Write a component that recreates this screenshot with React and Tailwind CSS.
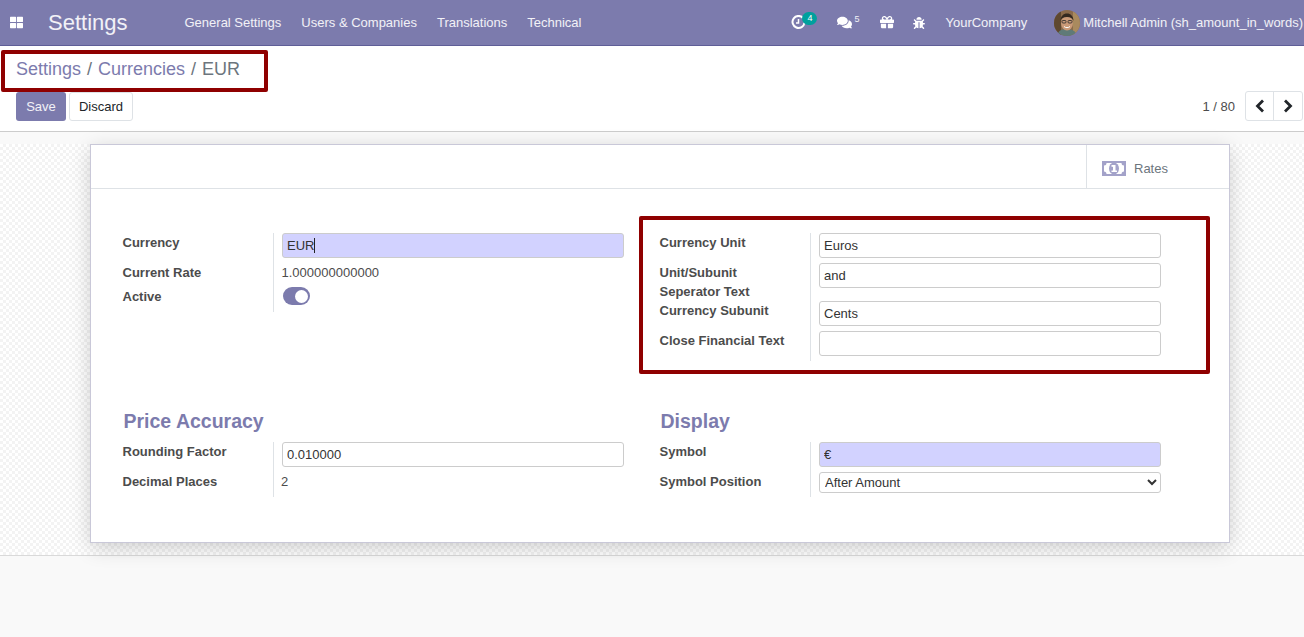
import React from "react";
import { FaThLarge, FaComments, FaGift, FaBug } from "react-icons/fa";

const navMenus = ["General Settings", "Users & Companies", "Translations", "Technical"];

const Avatar = () => (
  <svg width="26" height="26" viewBox="0 0 26 26" className="rounded-full shrink-0">
    <rect width="26" height="26" fill="#8a6a4a" />
    <rect x="0" y="0" width="7" height="26" fill="#5e4830" />
    <rect x="19" y="0" width="7" height="26" fill="#a98a5e" />
    <path d="M3 26c1-6 5-7 10-7s9 2 10 7z" fill="#5f7a78" />
    <ellipse cx="13" cy="13" rx="6" ry="7.500" fill="#c99a78" />
    <path d="M6.500 11c0-5 3-7.500 6.500-7.500s6.500 2.500 6.500 7.500c-1-3-3-4-6.500-4s-5.500 1-6.500 4z" fill="#33291f" />
    <rect x="8" y="10.500" width="4" height="2.500" rx="1" fill="none" stroke="#2a2a2a" strokeWidth="0.8" />
    <rect x="14" y="10.500" width="4" height="2.500" rx="1" fill="none" stroke="#2a2a2a" strokeWidth="0.8" />
    <path d="M10 16.500c1.500 1.500 4.500 1.500 6 0" stroke="#fff" strokeWidth="1" fill="none" />
  </svg>
);

const ClockIcon = () => (
  <svg width="15" height="15" viewBox="0 0 15 15" fill="none" stroke="#fff">
    <path d="M12.300 3.300A6 6 0 1 0 13.500 7.500" strokeWidth="2" />
    <path d="M7.500 4v4H5" strokeWidth="1.500" />
  </svg>
);

const MoneyIcon = () => (
  <svg width="24" height="15" viewBox="0 0 24 15" className="shrink-0">
    <rect width="24" height="15" fill="#a3a2c9" />
    <path d="M2 4.500Q4.500 4.500 4.500 2H19.500Q19.500 4.500 22 4.500V10.500Q19.500 10.500 19.500 13H4.500Q4.500 10.500 2 10.500z" fill="#fff" />
    <ellipse cx="12" cy="7.500" rx="5" ry="6" fill="#a3a2c9" />
    <rect x="11" y="4" width="2.500" height="7" fill="#fff" />
    <rect x="9.500" y="4" width="2" height="1.800" fill="#fff" />
    <rect x="9.500" y="9.500" width="5.500" height="1.500" fill="#fff" />
  </svg>
);

const Chevron = ({ d }) => (
  <svg width="10" height="14" viewBox="0 0 10 14" fill="none" stroke="#212529" strokeWidth="2.800">
    <path d={d} />
  </svg>
);

const Label = ({ children, className = "h-[30px]" }) => (
  <div className={`font-bold text-[#4c4c4c] leading-[19px] border-r border-[#dee2e6] ${className}`}>
    {children}
  </div>
);

const Value = ({ children, className = "h-[30px] pl-2" }) => <div className={className}>{children}</div>;

const Input = ({ value, required }) => (
  <input
    readOnly
    value={value}
    className={`block w-[342px] h-[25px] px-1 rounded-[3px] border border-[#ccc] text-[#333] text-[13px] outline-none ${
      required ? "bg-[#d2d2ff]" : "bg-white"
    }`}
  />
);

const Section = ({ title }) => (
  <h2 className="text-[19.500px] font-bold text-[#7c7bad] leading-[24px] pl-px mb-[9px]">{title}</h2>
);

export default function App() {
  return (
    <div
      className="relative h-[637px] w-[1304px] overflow-hidden bg-[#f9f9f9] text-[13px] text-[#4c4c4c]"
      style={{ fontFamily: '"Liberation Sans", Arial, sans-serif' }}
    >
      {/* top bar */}
      <nav className="flex items-center h-[46px] bg-[#7c7bad] border-b border-[#5f5e97] text-white/90">
        <div className="w-[48px] pl-[10px]">
          <FaThLarge className="text-white text-[13px]" />
        </div>
        <div className="w-[126.500px] text-[22px] leading-none">Settings</div>
        <div className="flex">
          {navMenus.map((item) => (
            <a key={item} className="px-[10px]">
              {item}
            </a>
          ))}
        </div>
        <div className="ml-auto flex items-center">
          <div className="relative mr-[31px]">
            <ClockIcon />
            <span className="absolute -top-[3px] left-[11px] w-[15px] h-[13px] rounded-full bg-[#00a09d] text-[9px] leading-[13px] text-center text-white">
              4
            </span>
          </div>
          <div className="flex items-start w-[22px] mr-[21px]">
            <FaComments className="text-white text-[15px]" />
            <span className="text-[9px] leading-[10px] ml-[2px] -mt-[1px]">5</span>
          </div>
          <FaGift className="text-white text-[14px] mr-[19px] -mt-[2px]" />
          <FaBug className="text-white text-[12px] mr-[20px]" />
          <span className="mr-[27px]">YourCompany</span>
          <Avatar />
          <span className="ml-[3px] mr-px whitespace-nowrap">Mitchell Admin (sh_amount_in_words)</span>
        </div>
      </nav>

      {/* control panel */}
      <div className="h-[86px] bg-white border-b border-[#ccc] pl-4 pr-px">
        <div className="h-[46px] flex items-center text-[18px] gap-[6px]">
          <a className="text-[#7c7bad]">Settings</a>
          <span className="text-[#6c757d]">/</span>
          <a className="text-[#7c7bad]">Currencies</a>
          <span className="text-[#6c757d]">/</span>
          <span className="text-[#6c757d]">EUR</span>
        </div>
        <div className="flex items-start">
          <button className="w-[50px] h-[29px] rounded-[3px] bg-[#7c7bad] text-white/90">Save</button>
          <button className="ml-[3px] w-[64px] h-[29px] rounded-[3px] bg-white border border-[#dee2e6] text-[#212529]">
            Discard
          </button>
          <span className="ml-auto mr-[10px] mt-[5px] text-[#4c4c4c]">1 / 80</span>
          <div className="flex -mt-px h-[30px] rounded-[3px] border border-[#dee2e6]">
            <button className="w-[28px] flex items-center justify-center border-r border-[#dee2e6]">
              <Chevron d="M8 1.500L2.500 7L8 12.500" />
            </button>
            <button className="w-[28px] flex items-center justify-center">
              <Chevron d="M2 1.500L7.500 7L2 12.500" />
            </button>
          </div>
        </div>
      </div>

      {/* form area */}
      <div className="mt-3 h-[412px] border-b border-[#d9d9d9] bg-[repeating-conic-gradient(#f3f3f3_0%_25%,#ffffff_0%_50%)] bg-[length:6px_6px]">
        <div className="ml-[90px] w-[1140px] h-[399px] bg-white border border-[#c9c8d8] shadow-[0_5px_20px_-1px_rgba(0,0,0,0.2)]">
          <div className="flex justify-end h-[44px] border-b border-[#dee2e6]">
            <button className="w-[143px] pl-[15px] pt-[4px] flex items-center gap-[8px] border-l border-[#dee2e6] text-[#6c757d]">
              <MoneyIcon />
              Rates
            </button>
          </div>
          <div className="pt-[44px] pl-[31.500px] grid grid-cols-[537px_501px]">
            <div className="h-[176px]">
              <div className="grid grid-cols-[151.500px_349.500px]">
                <Label>Currency</Label>
                <Value>
                  <div className="w-[342px] h-[25px] px-1 flex items-center rounded-[3px] border border-[#ccc] bg-[#d2d2ff] text-[#333]">
                    EUR
                    <span className="w-px h-[15px] bg-[#222]" />
                  </div>
                </Value>
                <Label className="h-[24px]">Current Rate</Label>
                <Value className="h-[24px] pl-[7.500px] leading-[19px]">1.000000000000</Value>
                <Label className="h-[25px]">Active</Label>
                <Value className="h-[25px] pl-[9px]">
                  <div className="w-[27px] h-[18px] rounded-full bg-[#7c7bad] flex items-center justify-end pr-[2px]">
                    <span className="w-[13px] h-[13px] rounded-full bg-white" />
                  </div>
                </Value>
              </div>
            </div>
            <div className="h-[176px]">
              <div className="grid grid-cols-[151.500px_349.500px]">
                <Label>Currency Unit</Label>
                <Value>
                  <Input value="Euros" />
                </Value>
                <Label className="h-[38px]">
                  Unit/Subunit
                  <br />
                  Seperator Text
                </Label>
                <Value className="h-[38px] pl-2">
                  <Input value="and" />
                </Value>
                <Label>Currency Subunit</Label>
                <Value>
                  <Input value="Cents" />
                </Value>
                <Label>Close Financial Text</Label>
                <Value>
                  <Input value="" />
                </Value>
              </div>
            </div>
            <div>
              <Section title="Price Accuracy" />
              <div className="grid grid-cols-[151.500px_349.500px]">
                <Label>Rounding Factor</Label>
                <Value>
                  <Input value="0.010000" />
                </Value>
                <Label className="h-[25px]">Decimal Places</Label>
                <Value className="h-[25px] pl-[7px] leading-[19px]">2</Value>
              </div>
            </div>
            <div>
              <Section title="Display" />
              <div className="grid grid-cols-[151.500px_349.500px]">
                <Label>Symbol</Label>
                <Value>
                  <Input value="€" required />
                </Value>
                <Label className="h-[25px]">Symbol Position</Label>
                <Value className="h-[25px] pl-2">
                  <select className="block w-[342px] h-[21px] pl-px rounded-[3px] border border-[#ccc] bg-white text-[#333] text-[13px]">
                    <option>After Amount</option>
                    <option>Before Amount</option>
                  </select>
                </Value>
              </div>
            </div>
          </div>
        </div>
      </div>

      {/* red annotation boxes */}
      <div className="absolute left-px top-[50px] w-[267px] h-[42px] border-4 border-[#8f0000] rounded-[2px]" />
      <div className="absolute left-[639px] top-[216px] w-[571px] h-[158px] border-4 border-[#8f0000] rounded-[2px]" />
    </div>
  );
}
